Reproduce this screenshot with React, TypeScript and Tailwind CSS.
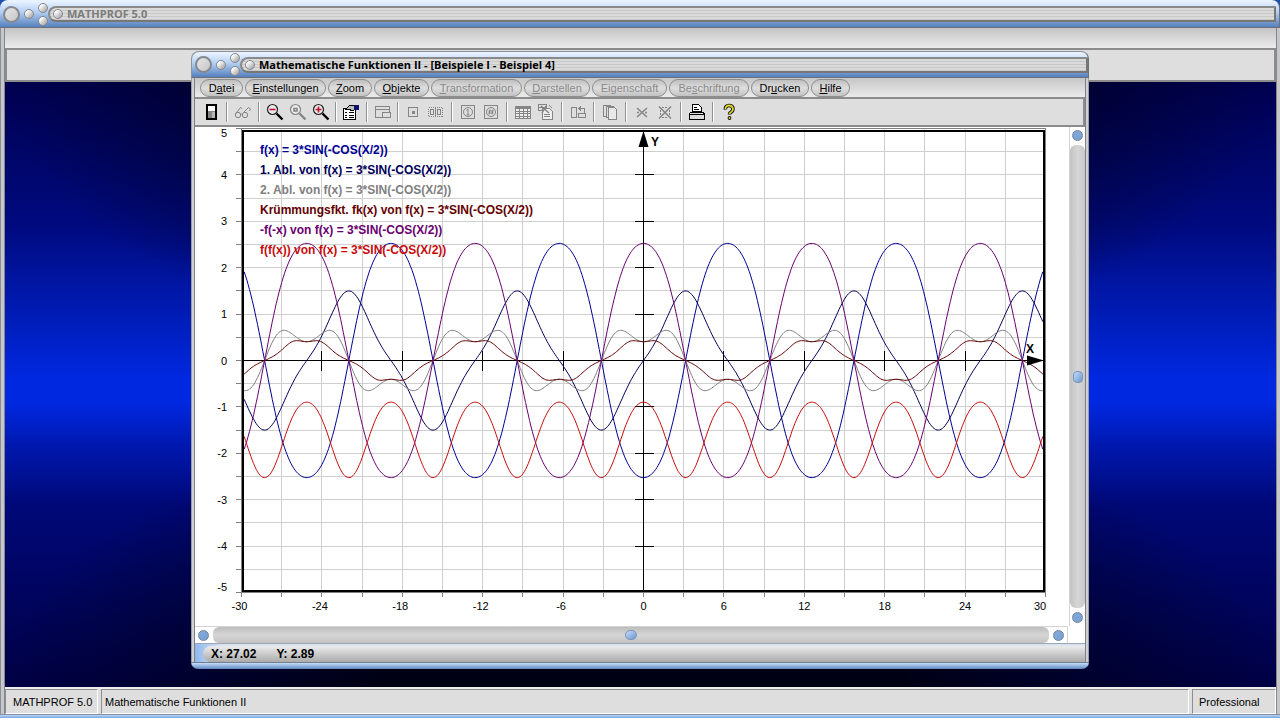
/**
 * MATHPROF function plotter: application frame with one child window
 * showing the curves, their legend and the scroll bars.
 */

import type { ReactNode } from 'react';

/** Plot geometry inside the chart svg */
const PLOT = { left: 46, right: 850, top: 1, bottom: 464, originX: 448.5, originY: 233.5 };
const UNIT_X = 13.4;
const UNIT_Y = 46.4;

const px = (x: number) => PLOT.originX + x * UNIT_X;
const py = (y: number) => PLOT.originY - y * UNIT_Y;

const f = (x: number) => 3 * Math.sin(-Math.cos(x / 2));
const f1 = (x: number) => 1.5 * Math.cos(Math.cos(x / 2)) * Math.sin(x / 2);
const f2 = (x: number) => {
  const c = Math.cos(x / 2);
  const s = Math.sin(x / 2);
  return 0.75 * (Math.sin(c) * s * s + Math.cos(c) * c);
};
const curvature = (x: number) => f2(x) / Math.pow(1 + f1(x) ** 2, 1.5);

/** Curves in drawing order, each with its legend line */
const CURVES = [
  { label: 'f(x) = 3*SIN(-COS(X/2))', fn: f, color: '#000096' },
  { label: '1. Abl. von f(x) = 3*SIN(-COS(X/2))', fn: f1, color: '#00005a' },
  { label: '2. Abl. von f(x) = 3*SIN(-COS(X/2))', fn: f2, color: '#808080' },
  { label: 'Krümmungsfkt. fk(x) von f(x) = 3*SIN(-COS(X/2))', fn: curvature, color: '#640000' },
  { label: '-f(-x) von f(x) = 3*SIN(-COS(X/2))', fn: (x: number) => -f(-x), color: '#6a0070' },
  { label: 'f(f(x)) von f(x) = 3*SIN(-COS(X/2))', fn: (x: number) => f(f(x)), color: '#c80c0c' },
];

const MENU = [
  { before: 'D', key: 'a', after: 'tei', width: 'w-[43px]' },
  { before: '', key: 'E', after: 'instellungen', width: 'w-[81px]' },
  { before: '', key: 'Z', after: 'oom', width: 'w-[44px]' },
  { before: '', key: 'O', after: 'bjekte', width: 'w-[55px]' },
  { before: '', key: 'T', after: 'ransformation', width: 'w-[91px]', disabled: true },
  { before: '', key: 'D', after: 'arstellen', width: 'w-[66px]', disabled: true },
  { before: 'Ei', key: 'g', after: 'enschaft', width: 'w-[75px]', disabled: true },
  { before: 'Be', key: 's', after: 'chriftung', width: 'w-[80px]', disabled: true },
  { before: 'Dr', key: 'u', after: 'cken', width: 'w-[58px]' },
  { before: '', key: 'H', after: 'ilfe', width: 'w-[39px]' },
];

/** Path through the samples of one function */
function curvePath(fn: (x: number) => number) {
  const parts: string[] = [];
  for (let x = -29.8; x <= 29.85; x += 0.1) {
    parts.push(`${px(x).toFixed(1)} ${py(fn(x)).toFixed(1)}`);
  }
  return `M${parts.join('L')}`;
}

/** Whole numbers from a to b in the given step */
function range(a: number, b: number, step: number) {
  const out: number[] = [];
  for (let v = a; v <= b; v += step) out.push(v);
  return out;
}

/** Round metal knobs at the left of a title bar */
function Knobs() {
  return (
    <div className="flex items-center pl-[3px]">
      <button aria-label="Systemmenü" className="size-[17px] rounded-full border-2 border-[#85888e] bg-linear-to-br from-[#e6e6e6] to-[#c6c6c6]" />
      <button aria-label="Minimieren" className="ml-1 size-[10px] rounded-full border border-[#85888e] bg-linear-to-br from-white from-20% to-[#9a9a9a]" />
      <div className="ml-1 flex flex-col gap-[3px]">
        <button aria-label="Maximieren" className="size-[10px] rounded-full border border-[#85888e] bg-linear-to-br from-white from-20% to-[#9a9a9a]" />
        <button aria-label="Schließen" className="size-[10px] rounded-full border border-[#85888e] bg-linear-to-br from-white from-20% to-[#9a9a9a]" />
      </div>
    </div>
  );
}

/** Title bar with the ribbed groove */
function TitleBar({ title, active }: { title: string; active?: boolean }) {
  return (
    <header
      className={`flex shrink-0 items-center rounded-t-lg border-r border-b border-[#6c727c] bg-linear-to-b from-[#e8f2ff] from-5% via-[#b4cff2] via-45% to-[#5580bd] ${active ? 'h-[27px] border-t border-l border-t-[#8d929b] border-l-[#8d929b]' : 'h-7 pt-px pr-[3px]'}`}
    >
      <Knobs />
      <div className="flex h-4 flex-1 items-center gap-1 rounded-l-full border-2 border-t-[#8a8a8a] border-r-[#777777] border-b-[#777777] border-l-[#8a8a8a] bg-[repeating-linear-gradient(to_bottom,#dadada_0px,#dadada_2px,#c8c8c8_2px,#c8c8c8_3px)] pl-[3px]">
        <span className="size-[10px] rounded-full border border-[#85888e] bg-linear-to-br from-white from-20% to-[#9a9a9a]" />
        <h1 className={`font-['Open_Sans','Noto_Sans',sans-serif] text-[11px] leading-3 font-bold whitespace-nowrap ${active ? 'text-black' : 'text-[#7c7c7c]'}`}>{title}</h1>
      </div>
    </header>
  );
}

/** Menu pills */
function MenuBar() {
  return (
    <nav className="flex h-[21px] shrink-0 items-center gap-[2px] border-b-2 border-[#8c8c8c] bg-linear-to-b from-[#c6c6c6] to-[#ebebeb] pl-[5px]">
      {MENU.map((item) => (
        <button
          key={item.key + item.after}
          disabled={item.disabled}
          className={`${item.width} h-[18px] rounded-full border border-[#8e8e8e] bg-linear-to-b from-[#bfbfbf] via-[#dedede] to-[#c2c2c2] text-center text-[11px] leading-4 whitespace-nowrap text-black disabled:text-[#8a8a8a]`}
        >
          {item.before}
          <span className="underline">{item.key}</span>
          {item.after}
        </button>
      ))}
    </nav>
  );
}

function ToolButton({ label, children }: { label: string; children: ReactNode }) {
  return (
    <button aria-label={label} className="flex h-6 w-[23px] shrink-0 items-center justify-center">
      <svg width="18" height="18" viewBox="0 0 18 18" fill="none" stroke="#858585" shapeRendering="crispEdges">
        {children}
      </svg>
    </button>
  );
}

function Separator({ tight }: { tight?: boolean }) {
  return <span className={`h-5 w-px bg-[#929292] shadow-[1px_0_0_#ffffff] ${tight ? 'mx-[3px]' : 'mx-1'}`} />;
}

/** Magnifier glyph; mark is drawn inside the lens */
function Magnifier({ lens, handle, mark, markColor }: { lens: string; handle: string; mark: string; markColor: string }) {
  return (
    <g shapeRendering="auto">
      <circle cx="6.5" cy="6.5" r="5" fill="#eaeaea" stroke={lens} strokeWidth="1.2" />
      <path d="M10.5 10.5 16.5 16.5" stroke={handle} strokeWidth="2.4" />
      <path d={mark} stroke={markColor} strokeWidth="1.6" />
    </g>
  );
}

/** Icon row below the menu */
function ToolBar() {
  return (
    <div className="flex h-7 shrink-0 items-center border-r-2 border-b-2 border-[#8c8c8c] bg-[#dedede] pl-1">
      <ToolButton label="Beenden">
        <path d="M5 2h9v14H5z" stroke="#000" strokeWidth="2" fill="#868686" />
        <path d="M6 3h7v5H6z" fill="#fff" stroke="none" />
        <path d="M10 9h3v6h-3z" fill="#b5b5b5" stroke="none" />
      </ToolButton>
      <Separator />
      <ToolButton label="Ansicht">
        <g shapeRendering="auto">
          <circle cx="4" cy="12" r="2.7" />
          <circle cx="11" cy="12" r="2.7" />
          <path d="M1.8 10.500 6.500 4.500l1.500 1M9.500 9.500 14.500 4.500l2 1.500-1 2M6.700 11.500q.8-1 1.600 0" />
        </g>
      </ToolButton>
      <Separator />
      <ToolButton label="Verkleinern">
        <Magnifier lens="#222" handle="#000" mark="M3.500 6.500h6" markColor="#c01030" />
      </ToolButton>
      <ToolButton label="Originalgröße">
        <Magnifier lens="#858585" handle="#858585" mark="M5 5.500h3v2.500h-3z" markColor="#858585" />
      </ToolButton>
      <ToolButton label="Vergrößern">
        <Magnifier lens="#222" handle="#000" mark="M3.500 6.500h6M6.500 3.500v6" markColor="#c01030" />
      </ToolButton>
      <Separator tight />
      <ToolButton label="Eigenschaften">
        <path d="M1.500 5.500h12v11h-12z" fill="#fff" stroke="#000" />
        <path d="M3 9.500h2M7 9.500h5M3 12.500h2M7 12.500h5M3 14.500h2M7 14.500h5" stroke="#000" />
        <path d="M4 6 8 2h4v5l-2 1-3-2z" fill="#bcbcbc" stroke="#000" />
        <path d="M12 2h5v5h-5z" fill="#10106e" stroke="none" />
      </ToolButton>
      <Separator />
      <ToolButton label="Fenster">
        <path d="M1.500 3.500h14v11h-14zM1.500 6.500h14" />
        <path d="M8.500 9.500h8v5h-8z" fill="#dedede" />
      </ToolButton>
      <Separator tight />
      <ToolButton label="Punkt">
        <path d="M4.500 4.500h9v9h-9z" />
        <path d="M8 8h3v3h-3z" fill="#858585" stroke="none" />
      </ToolButton>
      <ToolButton label="Bereich">
        <path d="M1.500 4.500h14v9h-14z" strokeDasharray="1 1" />
        <path d="M3.500 6.500h3v5h-3zM10.500 6.500h3v5h-3zM8.500 4v10" />
      </ToolButton>
      <Separator />
      <ToolButton label="Kreis">
        <path d="M2.500 2.500h13v13h-13z" />
        <g shapeRendering="auto">
          <circle cx="9" cy="9" r="4.500" />
          <path d="M9 6v6M7.500 7.500 9 6M7.500 12h3" />
        </g>
      </ToolButton>
      <ToolButton label="Kreisbereich">
        <path d="M2.500 2.500h13v13h-13z" />
        <g shapeRendering="auto">
          <circle cx="9" cy="9" r="4.500" />
          <path d="M8 6.500 7 11.500M11 6.500l-1 5M6.500 8h5M6.500 10h5" />
        </g>
      </ToolButton>
      <Separator />
      <ToolButton label="Tabelle">
        <path d="M1.500 3.500h15v12h-15z" fill="#eeeeee" />
        <path d="M2 5h14" strokeWidth="2" />
        <path d="M2 8.500h14M2 10.500h14M2 13.500h14M5.500 6v10M9.500 6v10M13.500 6v10" />
      </ToolButton>
      <ToolButton label="Protokoll">
        <path d="M5.500 5.500h7l3 3v8h-10z" fill="#eeeeee" />
        <path d="M7 11.500h6M7 13.500h6M1.500 1.500h8v3h-8zM1.500 4.500v3h4M12 2l3 3" />
        <path d="m4 3 8 7M9 3l-4 7" strokeWidth="1.5" shapeRendering="auto" />
      </ToolButton>
      <Separator />
      <ToolButton label="Tauschen">
        <path d="M2.500 4.500h5v10h-5zM9.500 10.500h7v4h-7zM10 5.500h5v4M12 3.500l-2 2 2 2" />
      </ToolButton>
      <Separator />
      <ToolButton label="Kopieren">
        <path d="M2.500 2.500h7v11h-7z" />
        <path d="M5.500 3.500h7v11h-7z" fill="#dedede" />
        <path d="M7.500 4.500h6l2 2v10h-8z" fill="#e8e8e8" />
      </ToolButton>
      <Separator />
      <ToolButton label="Löschen">
        <path d="m4 5 10 9M14 5 4 14M4 9.500h2M12 9.500h2" strokeWidth="1.500" shapeRendering="auto" />
      </ToolButton>
      <ToolButton label="Alles löschen">
        <path d="m3 3.500 12 12M15 3.500 3 15.500" strokeWidth="1.500" shapeRendering="auto" />
        <path d="M6 4.500h6M6 14.500h6M4.500 7v5M13.500 7v5" strokeDasharray="2 1" />
      </ToolButton>
      <Separator />
      <ToolButton label="Drucken">
        <path d="M4.500 8.500V1.500h6l3 3v4z" fill="#fff" stroke="#000" />
        <path d="M6 4.500h3M6 6.500h5" stroke="#000" />
        <path d="M3 9 1.500 11v5h15v-5L15 9z" fill="#dcdcdc" stroke="#000" />
        <path d="M2 11.500h14" stroke="#000" />
      </ToolButton>
      <Separator />
      <ToolButton label="Hilfe">
        <g shapeRendering="auto" strokeLinejoin="round">
          <path d="M5.500 6.500q-.5-4 3.500-4t4 3.500q0 2-2 3.200-1.500 .8-1.500 2.300" stroke="#111" strokeWidth="3.600" />
          <circle cx="9.500" cy="15" r="1.900" fill="#111" stroke="none" />
          <path d="M5.500 6q0-3.500 3.500-3.500t4 3.500q0 2-2 3.200-1.500 .8-1.500 1.800" stroke="#ddd428" strokeWidth="1.800" />
          <circle cx="9.500" cy="15" r="1" fill="#ddd428" stroke="none" />
        </g>
      </ToolButton>
    </div>
  );
}

/** Coordinate system with curves and axis labels */
function Chart() {
  return (
    <svg className="block size-full" viewBox="0 0 874 499" preserveAspectRatio="xMinYMin meet" fontSize="11">
      {/* grid */}
      <g stroke="#cfcfcf" shapeRendering="crispEdges">
        {range(-27, 27, 3).map((x) => (
          <line key={x} x1={px(x)} x2={px(x)} y1={PLOT.top} y2={PLOT.bottom} />
        ))}
        {range(-9, 9, 1).map((n) => (
          <line key={n} x1={PLOT.left} x2={PLOT.right} y1={py(n / 2)} y2={py(n / 2)} />
        ))}
      </g>

      {/* scale ticks outside the frame */}
      <g stroke="#808080" shapeRendering="crispEdges">
        {range(-10, 10, 1).map((n) => (
          <line key={n} x1="41" x2="46" y1={py(n / 2)} y2={py(n / 2)} />
        ))}
        {range(-30, 30, 3).map((x) => (
          <line key={x} x1={px(x)} x2={px(x)} y1="465" y2="470" />
        ))}
        <rect x="46.5" y="1.5" width="804" height="464" fill="none" />
      </g>
      <rect x="48" y="4" width="801" height="460" fill="none" stroke="#000" strokeWidth="2" shapeRendering="crispEdges" />

      {/* axes */}
      <g stroke="#000" shapeRendering="crispEdges">
        <line x1="48" x2="849" y1={PLOT.originY} y2={PLOT.originY} />
        <line x1={PLOT.originX} x2={PLOT.originX} y1="3" y2="464" />
        {[-24, -18, -12, -6, 6, 12, 18, 24].map((x) => (
          <line key={x} x1={px(x)} x2={px(x)} y1={PLOT.originY - 10} y2={PLOT.originY + 10} />
        ))}
        {[-4, -3, -2, -1, 1, 2, 3, 4].map((y) => (
          <line key={y} x1={PLOT.originX - 9} x2={PLOT.originX + 10} y1={py(y)} y2={py(y)} />
        ))}
      </g>

      {CURVES.map((c) => (
        <path key={c.label} d={curvePath(c.fn)} fill="none" stroke={c.color} />
      ))}

      <path d="M448.500 4 453.500 20h-10zM849 233.500 832 228.500v10z" />
      <text x="456" y="19" fontSize="12" fontWeight="bold">Y</text>
      <text x="831" y="226" fontSize="12" fontWeight="bold">X</text>

      {/* scale numbers */}
      {range(-5, 5, 1).map((y) => (
        <text key={y} x="32" y={y === 5 ? 10 : y === -5 ? 464 : py(y) + 4} textAnchor="end">{y}</text>
      ))}
      {range(-30, 30, 6).map((x) => (
        <text key={x} x={x === 30 ? 845 : x < 0 ? px(x) - 2 : px(x)} y="483" textAnchor="middle">{x}</text>
      ))}

      {/* legend */}
      {CURVES.map((c, i) => (
        <text key={c.label} x="65" y={27 + i * 20} fill={c.color} fontSize="12" fontWeight="bold">{c.label}</text>
      ))}
    </svg>
  );
}

function ScrollKnob({ label }: { label: string }) {
  return <button aria-label={label} className="size-[11px] shrink-0 rounded-full border border-[#6f8299] bg-linear-to-br from-[#82aadc] to-[#79a0d3]" />;
}

/** Child window with the plot */
function PlotWindow() {
  return (
    <section className="absolute inset-x-[191px] inset-y-[51px] flex flex-col">
      <TitleBar title="Mathematische Funktionen II - [Beispiele I - Beispiel 4]" active />
      <div className="flex min-h-0 flex-1 border-x border-[#9a9da3] bg-[#cfd0d3] px-[2px]">
        <div className="flex min-w-0 flex-1 flex-col border-x border-[#808084]">
          <MenuBar />
          <ToolBar />
          <div className="flex min-h-0 flex-1 bg-white">
            <div className="min-w-0 flex-1">
              <Chart />
            </div>
            <div className="flex w-4 flex-col items-center gap-1 border-l border-[#d4d4d4] py-[3px]">
              <ScrollKnob label="Nach oben" />
              <div className="flex w-full flex-1 items-center justify-center rounded-md bg-linear-to-r from-[#c2c2c2] via-[#d6d6d6] to-[#c9c9c9]">
                <span className="h-3 w-[10px] rounded-sm border border-[#7895bd] bg-linear-to-br from-[#c5ddfa] to-[#6c98d0]" />
              </div>
              <ScrollKnob label="Nach unten" />
            </div>
          </div>
          <div className="flex h-[17px] shrink-0 bg-white">
            <div className="flex flex-1 items-center gap-1 border-t border-r border-[#d4d4d4] px-[3px]">
              <ScrollKnob label="Nach links" />
              <div className="flex h-full flex-1 items-center justify-center rounded-md bg-linear-to-b from-[#bdbdbd] via-[#d6d6d6] to-[#c2c2c2]">
                <span className="h-[10px] w-3 rounded-md border border-[#7895bd] bg-linear-to-br from-[#c5ddfa] to-[#6c98d0]" />
              </div>
              <ScrollKnob label="Nach rechts" />
            </div>
            <div className="w-[17px]" />
          </div>
          <footer className="flex h-[19px] shrink-0 border-t border-[#9aa5b5] bg-linear-to-r from-[#8db8ee] to-[#dbe4ee] to-3% pt-[2px] pl-2">
            <p className="flex flex-1 items-center gap-5 rounded-l-full bg-linear-to-b from-[#ececec] to-[#ababab] pl-2 text-[12px] leading-4 font-bold">
              <span>X: 27.02</span>
              <span>Y: 2.89</span>
            </p>
          </footer>
        </div>
      </div>
      <div className="h-[7px] shrink-0 rounded-b-lg border-t border-[#777f8c] bg-linear-to-b from-[#c5defc] to-[#6088be]" />
    </section>
  );
}

export default function App() {
  return (
    <main className="relative flex h-screen flex-col overflow-hidden bg-[#1e4fae] font-['Liberation_Sans',Arial,sans-serif] text-black select-none">
      <TitleBar title="MATHPROF 5.0" />
      <div className="flex min-h-0 flex-1 border-l border-[#8b8d92] bg-[#c6c7ca] px-[3px]">
        <div className="flex min-w-0 flex-1 flex-col border-x border-[#86868a]">
          <div className="h-[22px] shrink-0 border-b-2 border-[#8c8c8c] bg-linear-to-b from-[#c4c4c4] to-[#ececec]" />
          <div className="h-8 shrink-0 border-r-2 border-b-2 border-l-2 border-[#8c8c8c] bg-[#dedede]" />
          <div className="flex-1 bg-[radial-gradient(ellipse_50%_48%_at_50%_0%,#000008d0_40%,transparent),radial-gradient(ellipse_50%_48%_at_50%_100%,#000008d0_40%,transparent),linear-gradient(to_bottom,#000050,#000a80_24%,#001db8_39%,#0028e0_49%,#0028e0_53%,#0018b0_60%,#000878_70%,#000044)]" />
          <footer className="flex h-[27px] shrink-0 gap-[3px] border-t-2 border-[#ededed] bg-[#dedede] text-[11px] leading-6">
            <span className="w-[93px] border border-[#8e8e8e] border-r-white border-b-white pl-[7px]">MATHPROF 5.0</span>
            <span className="flex-1 border border-[#8e8e8e] border-r-white border-b-white pl-[3px]">Mathematische Funktionen II</span>
            <span className="w-[84px] border border-[#8e8e8e] border-r-white border-b-white pl-[6px]">Professional</span>
          </footer>
        </div>
      </div>
      <div className="h-[6px] shrink-0 border-t border-b-2 border-t-[#8790a0] border-b-white bg-linear-to-b from-[#b9d6fb] to-[#7ba6dd]" />
      <PlotWindow />
    </main>
  );
}
